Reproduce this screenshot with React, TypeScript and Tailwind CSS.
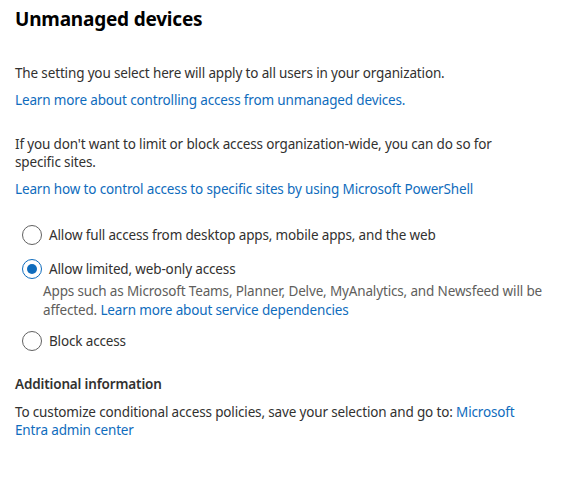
import React, { useState } from 'react';

const options = [
  { id: 'full', label: 'Allow full access from desktop apps, mobile apps, and the web' },
  { id: 'limited', label: 'Allow limited, web-only access' },
  { id: 'block', label: 'Block access' },
];

const Radio: React.FC<{ checked: boolean }> = ({ checked }) => (
  <span
    className={`flex h-5 w-5 shrink-0 items-center justify-center rounded-full border ${
      checked ? 'border-[#0f6cbd]' : 'border-[#616161]'
    }`}
  >
    {checked && <span className="h-[10px] w-[10px] rounded-full bg-[#0f6cbd]" />}
  </span>
);

export default function App() {
  const [selected, setSelected] = useState('limited');

  return (
    <div
      className="min-h-screen bg-white pl-[15px] pr-[17px] pt-[5px] text-[13.5px] leading-[18px] tracking-[-0.15px] text-[#323130]"
      style={{ fontFamily: '"Segoe UI", "Noto Sans", sans-serif' }}
    >
      <h1 className="text-[19px] font-bold leading-[28px] tracking-[-0.2px] text-[#000000]">Unmanaged devices</h1>

      <p className="mt-[31px]">The setting you select here will apply to all users in your organization.</p>
      <a href="#" className="mt-[9px] block text-[#0f6cbd]">
        Learn more about controlling access from unmanaged devices.
      </a>

      <p className="mt-[26px] pr-[20px]">
        If you don't want to limit or block access organization-wide, you can do so for specific sites.
      </p>
      <a href="#" className="mt-[9px] block text-[#0f6cbd]">
        Learn how to control access to specific sites by using Microsoft PowerShell
      </a>

      <div className="mt-[27px] flex flex-col pl-[7px]">
        {options.map((opt, i) => (
          <div key={opt.id} className={i === 1 ? 'mt-[14px]' : i === 2 ? 'mt-[11px]' : ''}>
            <label className="flex cursor-pointer items-center gap-[7px]" onClick={() => setSelected(opt.id)}>
              <Radio checked={selected === opt.id} />
              <span>{opt.label}</span>
            </label>
            {opt.id === 'limited' && (
              <p className="mt-[3px] pl-[21px] leading-[19px] text-[#605e5c]">
                Apps such as Microsoft Teams, Planner, Delve, MyAnalytics, and Newsfeed will be affected.{' '}
                <a href="#" className="text-[#0f6cbd]">
                  Learn more about service dependencies
                </a>
              </p>
            )}
          </div>
        ))}
      </div>

      <h2 className="mt-[23px] font-semibold leading-[20px]">Additional information</h2>
      <p className="mt-[9px]">
        To customize conditional access policies, save your selection and go to:{' '}
        <a href="#" className="text-[#0f6cbd]">
          Microsoft Entra admin center
        </a>
      </p>
    </div>
  );
}
